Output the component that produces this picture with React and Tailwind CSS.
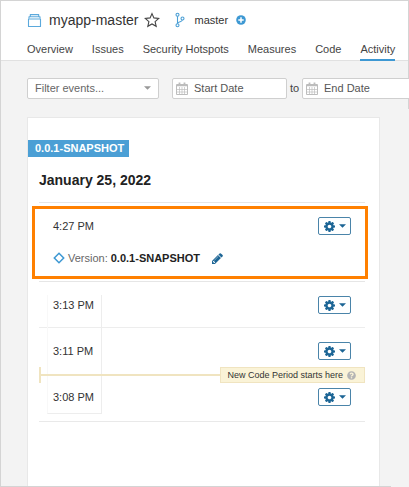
import React from "react";
import { FaQuestionCircle } from "react-icons/fa";

function ProjectIcon() {
  return (
    <svg viewBox="0 0 15 15" className="h-[15px] w-[15px] shrink-0" fill="none" stroke="#5ba9dc" strokeWidth="1.100" strokeLinejoin="round" aria-hidden="true">
      <path d="M1.500 6h12v7.500h-12z" />
      <path d="M2 5.500V3.800h11v1.700M3.300 3.500V1.600h8.400v1.900" />
    </svg>
  );
}

function StarIcon() {
  return (
    <svg viewBox="0 0 16 16" className="h-4 w-4" fill="none" stroke="#444" strokeWidth="1.100" strokeLinejoin="miter" aria-hidden="true">
      <path d="M8 1.600l1.900 4.300 4.800.500-3.600 3.200 1.100 4.700L8 11.900l-4.200 2.400 1.100-4.700L1.300 6.400l4.800-.500z" />
    </svg>
  );
}

function BranchIcon() {
  return (
    <svg viewBox="0 0 10 16" className="h-4 w-[10px] shrink-0" fill="none" stroke="#4b9fd5" strokeWidth="1.100" aria-hidden="true">
      <circle cx="2.500" cy="2.700" r="1.500" />
      <circle cx="2.500" cy="13.300" r="1.500" />
      <circle cx="7.500" cy="6.500" r="1.500" />
      <path d="M2.500 4.200v7.600M7.300 8c-.300 2-3 1.400-4.800 3.200" />
    </svg>
  );
}

function PlusIcon() {
  return (
    <svg viewBox="0 0 10 10" className="h-[10px] w-[10px]" aria-hidden="true">
      <circle cx="5" cy="5" r="4.800" fill="#3d98d3" />
      <path d="M5 2.300v5.400M2.300 5h5.400" stroke="#fff" strokeWidth="1.500" />
    </svg>
  );
}

function CalendarIcon() {
  return (
    <svg viewBox="0 0 12 13" className="pointer-events-none col-start-1 row-start-1 ml-1 h-[13px] w-3" fill="none" stroke="#bdbdbd" aria-hidden="true">
      <path d="M.500 2.500h11v10H.500z" strokeWidth="1" />
      <path d="M1 3.500h10" strokeWidth="1.500" />
      <path d="M.500 7.500h11M.500 10h11M3.500 5v7M6 5v7M8.500 5v7" strokeWidth="0.700" />
      <path d="M3.500.500v3M8.500.500v3" strokeWidth="1.800" />
    </svg>
  );
}

function GearIcon() {
  return (
    <svg viewBox="0 128 1536 1536" className="h-[11px] w-[11px] fill-[#1c6595]" aria-hidden="true">
      <path d="M1024 896q0-106-75-181t-181-75-181 75-75 181 75 181 181 75 181-75 75-181zm512-109v222q0 12-8 23t-20 13l-185 28q-19 54-39 91 35 50 107 138 10 12 10 25t-9 23q-27 37-99 108t-94 71q-12 0-26-9l-138-108q-44 23-91 38-16 136-29 186-7 28-36 28h-222q-14 0-24.500-8.500t-11.500-21.500l-28-184q-49-16-90-37l-141 107q-10 9-25 9-14 0-25-11-126-114-165-168-7-10-7-23 0-12 8-23 15-21 51-66.500t54-70.500q-27-50-41-99l-183-27q-13-2-21-12.500t-8-23.500v-222q0-12 8-23t19-13l186-28q14-46 39-92-40-57-107-138-10-12-10-24 0-10 9-23 26-36 98.500-107.500t94.500-71.500q13 0 26 10l138 107q44-23 91-38 16-136 29-186 7-28 36-28h222q14 0 24.500 8.500t11.500 21.500l28 184q49 16 90 37l142-107q9-9 24-9 13 0 25 10 129 119 165 170 7 8 7 22 0 12-8 23-15 21-51 66.500t-54 70.500q26 50 41 98l183 28q13 2 21 12.500t8 23.500z" />
    </svg>
  );
}

function PencilIcon() {
  return (
    <svg viewBox="0 128 1536 1536" className="h-[11px] w-[11px] fill-[#1c6595]" aria-hidden="true">
      <path d="M363 1536l91-91-235-235-91 91v107h128v128h107zm523-928q0-22-22-22-10 0-17 7l-542 542q-7 7-7 17 0 22 22 22 10 0 17-7l542-542q7-7 7-17zm-54-192l416 416-832 832h-416v-416zm683 96q0 53-37 90l-166 166-416-416 166-165q36-38 90-38 53 0 91 38l235 234q37 39 37 91z" />
    </svg>
  );
}

function Caret({ className }) {
  return (
    <svg viewBox="0 0 8 4" className={className} aria-hidden="true">
      <path d="M0 0h8L4 4z" />
    </svg>
  );
}

function DateField({ label }) {
  return (
    <label className="grid w-[115px] shrink-0 items-center">
      <input
        type="text"
        placeholder={label}
        aria-label={label}
        className="col-start-1 row-start-1 h-[21px] w-full rounded-[2px] border border-[#cfcfcf] bg-white pl-[21px] text-[11px] text-[#444] outline-none placeholder:text-[#555]"
      />
      <CalendarIcon />
    </label>
  );
}

function Analysis({ time, className, children }) {
  return (
    <li className={className}>
      <div className="flex items-center justify-between pr-[14px] pl-[14px]">
        <time className="text-[11px] leading-[18px] text-[#333]">{time}</time>
        <button
          type="button"
          aria-label={`Actions for ${time}`}
          className="flex h-[18px] w-[33px] items-center justify-center gap-1 rounded-[2px] border border-[#4a84a9] bg-white"
        >
          <GearIcon />
          <Caret className="h-[4px] w-[7px] fill-[#1c6595]" />
        </button>
      </div>
      {children}
    </li>
  );
}

const tabs = ["Overview", "Issues", "Security Hotspots", "Measures", "Code", "Activity"];

export default function App() {
  return (
    <div className="flex min-h-screen flex-col overflow-hidden border-l border-[#d4d4d4] bg-[#f3f3f3] font-['Liberation_Sans',Arial,sans-serif]">
      <header className="border-t border-r border-[#d4d4d4] bg-white">
        <div className="flex h-[38px] items-center pl-[26px]">
          <ProjectIcon />
          <h1 className="ml-[7px] text-[14px] leading-5 text-[#333]">myapp-master</h1>
          <button type="button" aria-label="Favorite" className="ml-[6px]">
            <StarIcon />
          </button>
          <span className="ml-[15px] flex items-center">
            <BranchIcon />
            <span className="ml-[9px] text-[11px] leading-5 text-[#333]">master</span>
          </span>
          <button type="button" aria-label="Add branch" className="ml-2">
            <PlusIcon />
          </button>
        </div>
        <nav className="flex gap-[19px] border-b border-[#e1e1e1] pl-[26px]">
          {tabs.map((tab) => (
            <a
              key={tab}
              href="#"
              className={
                "-mb-px h-[22px] text-[11px] leading-5 whitespace-nowrap text-[#444] " +
                (tab === "Activity" ? "border-b-2 border-[#3d98d3]" : "")
              }
            >
              {tab}
            </a>
          ))}
        </nav>
      </header>

      <form className="flex h-12 items-center border-r border-[#d4d4d4] pt-[6px] pl-[26px]">
        <label className="grid w-[132px] shrink-0 items-center">
          <select
            aria-label="Filter events"
            className="col-start-1 row-start-1 h-[21px] appearance-none rounded-[2px] border border-[#cfcfcf] bg-white pl-[7px] text-[11px] text-[#666] outline-none"
          >
            <option>Filter events...</option>
          </select>
          <Caret className="pointer-events-none col-start-1 row-start-1 mr-[8px] h-[4px] w-[7px] justify-self-end fill-[#999]" />
        </label>
        <div className="ml-[13px] flex items-center">
          <DateField label="Start Date" />
          <span className="w-[15px] text-center text-[11px] text-[#444]">to</span>
          <DateField label="End Date" />
        </div>
      </form>

      <main className="mt-2 mr-[29px] ml-[26px] flex-1 border border-b-0 border-[#e8e8e8] bg-white pr-[14px] pl-[11px]">
        <span className="mt-[22px] -ml-[11px] inline-block h-[17px] bg-[#4b9fd5] pr-[5px] pl-[7px] align-top text-[11px] leading-[17px] font-bold text-white">
          0.0.1-SNAPSHOT
        </span>
        <h2 className="mt-[13px] h-[33px] border-b border-[#e6e6e6] text-[14px] leading-5 font-bold text-[#222]">
          January 25, 2022
        </h2>
        <ul className="relative">
          <Analysis time="4:27 PM" className="relative border-b border-[#e6e6e6] pt-[14px] pb-[15px]">
            <div className="mt-[15px] flex h-4 items-center pl-[14px]">
              <svg viewBox="0 0 12 12" className="h-3 w-3" fill="none" stroke="#3d98d3" strokeWidth="1.500" aria-hidden="true">
                <path d="M6 1.300L10.700 6 6 10.700 1.300 6z" />
              </svg>
              <span className="ml-[3px] text-[11px] text-[#666]">Version:</span>
              <strong className="ml-[3px] text-[11px] text-[#222]">0.0.1-SNAPSHOT</strong>
              <button type="button" aria-label="Edit version" className="ml-3">
                <PencilIcon />
              </button>
            </div>
            <div className="pointer-events-none absolute top-[3px] -right-[3px] bottom-[2px] -left-[7px] border-3 border-[#ff8000]" />
          </Analysis>
          <Analysis time="3:13 PM" className="border-b border-[#ededed] pt-[14px] pb-[13px]" />
          <Analysis time="3:11 PM" className="pt-[14px] pb-[14px]" />
          <li className="relative z-10 flex h-[2px] items-center">
            <span className="h-4 w-[2px] bg-[#f0e4c0]" />
            <span className="h-[2px] flex-1 bg-[#f0e4c0]" />
            <span className="flex h-4 items-center gap-[4px] border border-[#f0e4c0] bg-[#faf3d7] pr-2 pl-[6px] text-[9px] leading-none whitespace-nowrap text-[#333]">
              New Code Period starts here
              <FaQuestionCircle className="h-[9px] w-[9px] text-[#b4b4b4]" />
            </span>
          </li>
          <Analysis time="3:08 PM" className="border-b border-[#e9e9e9] pt-[12px] pb-[15px]" />
          <li aria-hidden="true" className="pointer-events-none absolute bottom-2 left-2 h-[119px] w-[55px] border-r border-b border-l border-[#ededed] border-l-[#f8f8f8]" />
        </ul>
      </main>
      <div className="mr-[18px] h-px bg-[#d4d4d4]" />
    </div>
  );
}
